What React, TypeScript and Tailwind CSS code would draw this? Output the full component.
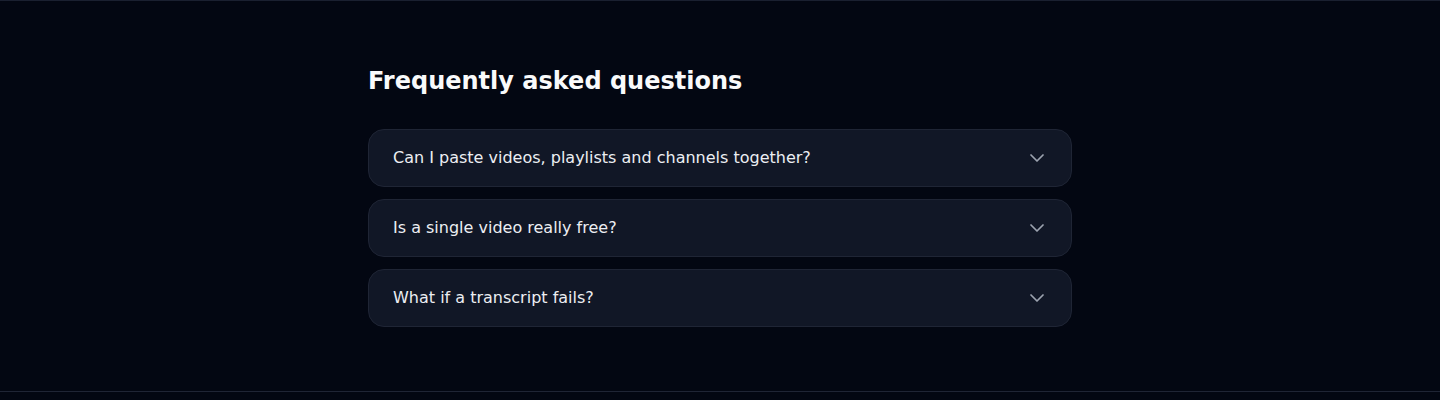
import { ChevronDown } from "lucide-react";

const FAQS = [
  "Can I paste videos, playlists and channels together?",
  "Is a single video really free?",
  "What if a transcript fails?",
];

export default function App() {
  return (
    <div
      className="min-h-[400px] bg-[#030712] text-white"
      style={{ fontFamily: '"DejaVu Sans", sans-serif' }}
    >
      {/* FAQ section */}
      <section className="border-t border-[#1a2030] py-16">
        <div className="mx-auto max-w-3xl px-8">
          <h2 className="text-2xl font-bold leading-8 text-[#f9fafb]">Frequently asked questions</h2>
          <div className="mt-8 space-y-3">
            {FAQS.map((q) => (
              <button
                key={q}
                className="flex w-full items-center justify-between rounded-2xl border border-[#1f2535] bg-[#111726] py-4 pl-6 pr-[22px] text-left"
              >
                <span className="text-base leading-6 text-[#eceef2]">{q}</span>
                <ChevronDown className="h-6 w-6 -my-1 text-[#9ca3af]" strokeWidth={1.75} />
              </button>
            ))}
          </div>
        </div>
      </section>
      <footer className="border-t border-[#1f2535] h-2" />
    </div>
  );
}
